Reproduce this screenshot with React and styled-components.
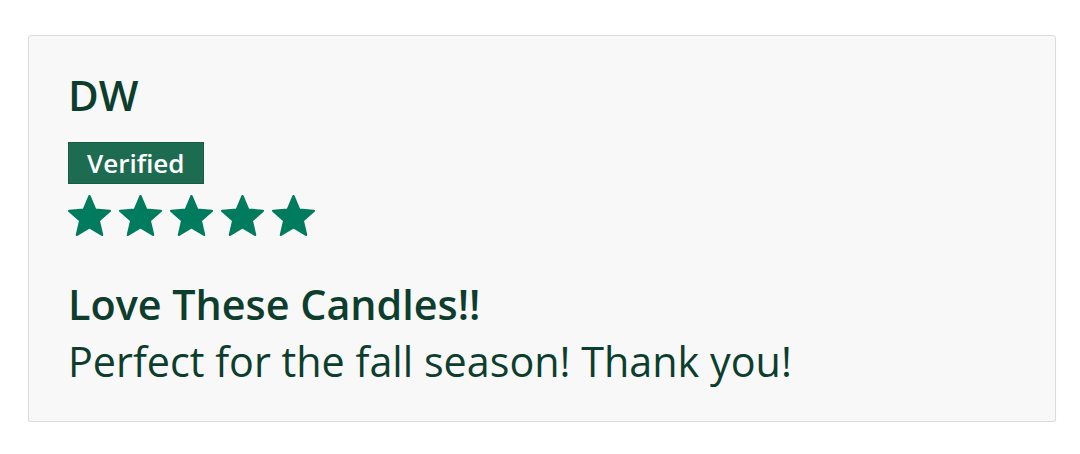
import React from "react";
import styled, { createGlobalStyle } from "styled-components";

const Global = createGlobalStyle`
  html, body { margin: 0; padding: 0; background: #ffffff; }
  body { font-family: "Open Sans", "Noto Sans", sans-serif; }
`;

const Page = styled.div`
  padding: 35px 24px 0 28px;
`;

const Card = styled.section`
  box-sizing: border-box;
  width: 1028px;
  height: 387px;
  background: #f8f8f8;
  border: 1px solid #dcdcdc;
  border-radius: 3px;
  box-shadow: 0 1px 1px rgba(0, 0, 0, 0.08);
  padding: 35px 39px 36px;
  display: flex;
  flex-direction: column;
  align-items: flex-start;
  color: #0d3e2d;
`;

const Author = styled.div`
  font-size: 42px;
  line-height: 48px;
  font-weight: 600;
`;

const Badge = styled.span`
  margin-top: 23px;
  box-sizing: border-box;
  height: 42px;
  padding: 0 19px 0 18px;
  display: inline-flex;
  align-items: center;
  background: #1d6b51;
  border: 1px solid #175c45;
  color: #ffffff;
  font-size: 26px;
  font-weight: 600;
  line-height: 1;
`;

const Stars = styled.div`
  margin-top: 11px;
  display: flex;
  gap: 8px;
`;

const StarSvg = styled.svg`
  width: 43px;
  height: 41px;
  display: block;
`;

const Title = styled.h3`
  margin: 44px 0 0;
  font-size: 41.3px;
  line-height: 48px;
  font-weight: 600;
`;

const Body = styled.p`
  margin: 9px 0 0;
  font-size: 41.3px;
  line-height: 48px;
  font-weight: 400;
`;

const Star = () => (
  <StarSvg viewBox="1.4 1.4 21.2 20.2">
    <path
      d="M12 17.27L18.18 21l-1.64-7.03L22 9.24l-7.19-.61L12 2 9.19 8.63 2 9.24l5.46 4.73L5.82 21z"
      fill="#007b5d"
      stroke="#007b5d"
      strokeWidth="1.2"
      strokeLinejoin="round"
    />
  </StarSvg>
);

export default function App() {
  return (
    <>
      <Global />
      <Page>
        <Card>
          <Author>DW</Author>
          <Badge>Verified</Badge>
          <Stars>
            {[0, 1, 2, 3, 4].map((i) => (
              <Star key={i} />
            ))}
          </Stars>
          <Title>Love These Candles!!</Title>
          <Body>Perfect for the fall season! Thank you!</Body>
        </Card>
      </Page>
    </>
  );
}
